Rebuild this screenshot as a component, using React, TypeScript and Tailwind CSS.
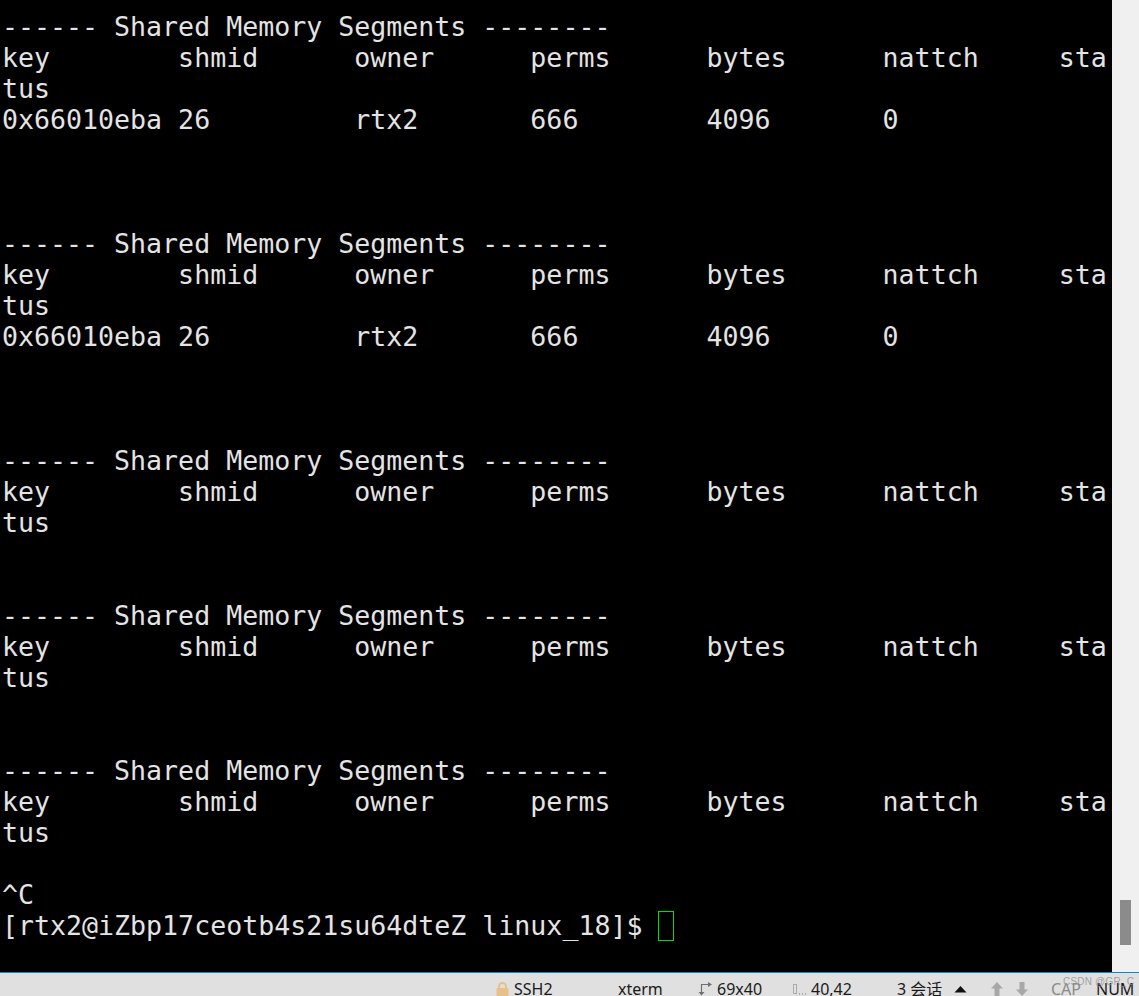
import React from 'react';

const header = 'key        shmid      owner      perms      bytes      nattch     sta';
const rule = '------ Shared Memory Segments --------';
const row = '0x66010eba 26         rtx2       666        4096       0';

const lines = [
  rule, header, 'tus', row, '', '', '',
  rule, header, 'tus', row, '', '', '',
  rule, header, 'tus', '', '',
  rule, header, 'tus', '', '',
  rule, header, 'tus', '',
  '^C',
];

export default function App() {
  return (
    <div className="relative flex h-[996px] w-[1139px] flex-col overflow-hidden bg-black">
      <div className="flex h-[972px] shrink-0">
        <div className="w-[1112px] shrink-0 whitespace-pre bg-black pl-[2px] pt-[11px] font-['DejaVu_Sans_Mono',monospace] text-[26.6px] leading-[31px] text-[#e4e4e4]">
          {lines.map((l, i) => (
            <div key={i} className="h-[31px]">{l}</div>
          ))}
          <div className="flex h-[31px]">
            <span>{'[rtx2@iZbp17ceotb4s21su64dteZ linux_18]$ '}</span>
            <span className="mt-[1px] h-[30px] w-[16px] border border-[#00e000]" />
          </div>
        </div>
        <div className="flex flex-1 flex-col items-center bg-[#f0f0f0] pt-[900px] pr-[1px]">
          <div className="h-[45px] w-[11px] bg-[#8b8b8b]" />
        </div>
      </div>
      <div className="flex flex-1 items-center overflow-hidden border-t border-[#0a84d6] bg-[#e0e0e0] pl-[496px] pt-[9px] font-['Noto_Sans','Noto_Sans_CJK_SC',sans-serif] text-[16px] leading-none text-[#1a1a1a] whitespace-pre">
        <svg width="13" height="15" viewBox="0 0 13 15" className="shrink-0">
          <path d="M3 7V4.500a3.500 3.500 0 0 1 7 0V7" fill="none" stroke="#e8c08c" strokeWidth="2" />
          <rect x="0.5" y="6" width="12" height="9" rx="1" fill="#e8c08c" />
        </svg>
        <span className="ml-[5px] w-[104px] shrink-0">SSH2</span>
        <span className="w-[80px] shrink-0">xterm</span>
        <svg width="14" height="14" viewBox="0 0 14 14" className="shrink-0" fill="none" stroke="#707070" strokeWidth="1.200">
          <path d="M3.500 2.500h7M3.500 2v8" />
          <path d="M10 0l4 2.500-4 2.500zM0.500 10h6l-3 3.500z" fill="#707070" stroke="none" />
        </svg>
        <span className="ml-[5px] w-[75px] shrink-0">69x40</span>
        <svg width="15" height="12" viewBox="0 0 15 12" className="shrink-0" fill="none" stroke="#777">
          <path d="M1.500 1.500h3v9h-3z" strokeDasharray="1 1" />
          <path d="M7 11h1M10 11h1M13 11h1" />
        </svg>
        <span className="ml-[4px] w-[86px] shrink-0">40,42</span>
        <span className="w-[57px] shrink-0">3 会话</span>
        <svg width="13" height="7" viewBox="0 0 13 7" className="shrink-0">
          <path d="M6.500 0l6 6.500H0.500z" fill="#111" />
        </svg>
        <svg width="12" height="14" viewBox="0 0 12 14" className="ml-[24px] shrink-0">
          <path d="M6 0l6 6.500H8.500V14h-5V6.500H0z" fill="#a8a8a8" />
        </svg>
        <svg width="12" height="14" viewBox="0 0 12 14" className="ml-[13px] shrink-0">
          <path d="M6 14l6-6.500H8.500V0h-5v7.500H0z" fill="#a8a8a8" />
        </svg>
        <span className="ml-[23px] w-[45px] shrink-0 text-[#8a8a8a]">CAP</span>
        <span>NUM</span>
      </div>
      <span className="absolute left-[1063px] top-[975px] font-['Liberation_Sans',sans-serif] text-[10px] leading-[14px] tracking-[0.2px] text-[#8f8f8f]/80">CSDN @GR_C</span>
    </div>
  );
}
